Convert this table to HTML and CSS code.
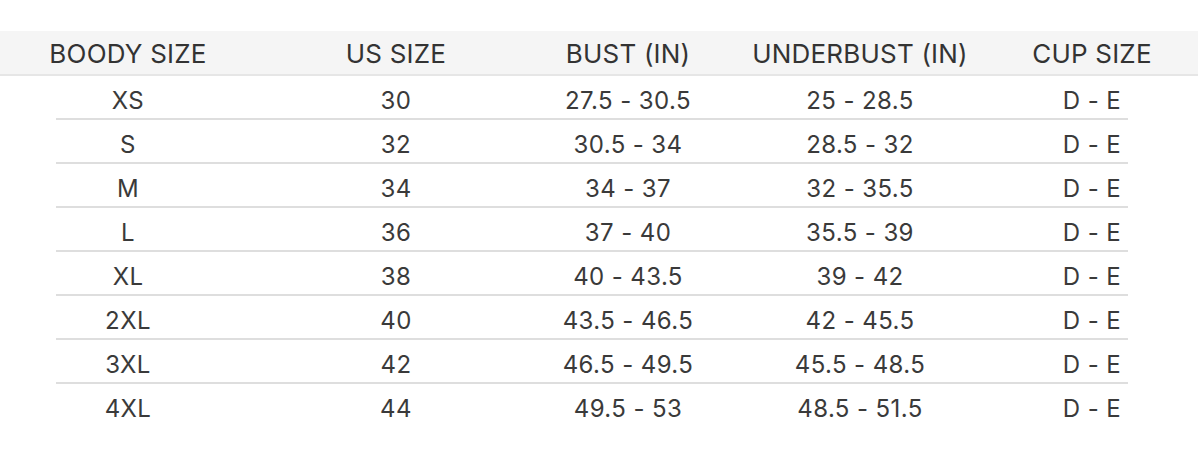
FILE: index.html
```html
<!DOCTYPE html>
<html>
<head>
<meta charset="utf-8">
<link rel="stylesheet" href="styles.css">
</head>
<body>
<div class="chart">
  <div class="row head">
    <div>BOODY SIZE</div><div>US SIZE</div><div>BUST (IN)</div><div>UNDERBUST (IN)</div><div>CUP SIZE</div>
  </div>
  <div class="row"><div>XS</div><div>30</div><div>27.5 - 30.5</div><div>25 - 28.5</div><div>D - E</div></div>
  <div class="row"><div>S</div><div>32</div><div>30.5 - 34</div><div>28.5 - 32</div><div>D - E</div></div>
  <div class="row"><div>M</div><div>34</div><div>34 - 37</div><div>32 - 35.5</div><div>D - E</div></div>
  <div class="row"><div>L</div><div>36</div><div>37 - 40</div><div>35.5 - 39</div><div>D - E</div></div>
  <div class="row"><div>XL</div><div>38</div><div>40 - 43.5</div><div>39 - 42</div><div>D - E</div></div>
  <div class="row"><div>2XL</div><div>40</div><div>43.5 - 46.5</div><div>42 - 45.5</div><div>D - E</div></div>
  <div class="row"><div>3XL</div><div>42</div><div>46.5 - 49.5</div><div>45.5 - 48.5</div><div>D - E</div></div>
  <div class="row last"><div>4XL</div><div>44</div><div>49.5 - 53</div><div>48.5 - 51.5</div><div>D - E</div></div>
</div>
</body>
</html>
```
FILE: styles.css
```css
html, body {
  margin: 0;
  padding: 0;
  background: #fff;
}
body {
  font-family: Inter, "Noto Sans", sans-serif;
  color: #3a3a3a;
}
.chart {
  padding-top: 31px;
}
.row {
  display: grid;
  grid-template-columns: 256px 280px 184px 280px 184px;
  height: 44px;
  padding-top: 4px;
  align-items: center;
  text-align: center;
  font-size: 24px;
  letter-spacing: 0.4px;
  background: linear-gradient(#dedede, #dedede) no-repeat 56px 100% / 1072px 2px;
  box-sizing: border-box;
  white-space: nowrap;
}
.row.head {
  height: 45px;
  padding-top: 2px;
  font-size: 26px;
  letter-spacing: 0.2px;
  background: #f5f5f5;
  border-bottom: 2px solid #e6e6e6;
  color: #333;
}
.row.last {
  background: none;
}
```
